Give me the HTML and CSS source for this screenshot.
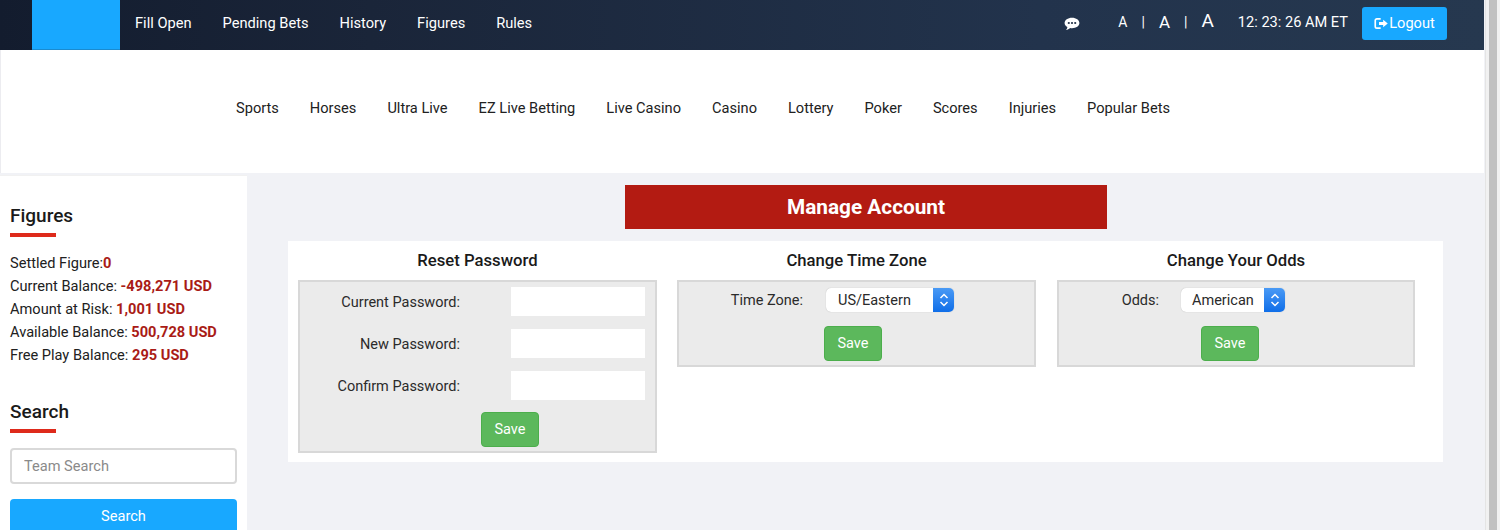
FILE: index.html
```html
<!DOCTYPE html>
<html lang="en">
<head>
<meta charset="utf-8">
<title>Manage Account</title>
<link rel="stylesheet" href="styles.css">
</head>
<body>
<div class="page">
  <header class="topbar">
    <div class="logo"></div>
    <nav class="topnav">
      <a>Fill Open</a><a>Pending Bets</a><a>History</a><a>Figures</a><a>Rules</a>
    </nav>
    <div class="tools">
      <svg class="chat" width="16" height="14" viewBox="0 0 16 14"><path fill="#fff" d="M8 .8c4.2 0 7.4 2.3 7.4 5.2S12.200 11.200 8 11.200c-.7 0-1.300-.1-1.900-.2C5 12.100 3.700 12.900 2 13c.8-.8 1.300-1.800 1.400-3C1.600 9 .6 7.600.6 6 .6 3.100 3.800.8 8 .8z"/><circle cx="4.800" cy="6" r="1.100" fill="#1f2e45"/><circle cx="8" cy="6" r="1.100" fill="#1f2e45"/><circle cx="11.200" cy="6" r="1.100" fill="#1f2e45"/></svg>
      <div class="sizes"><span class="a1">A</span><i>|</i><span class="a2">A</span><i>|</i><span class="a3">A</span></div>
      <div class="clock">12: 23: 26 AM ET</div>
      <a class="logout"><svg width="15" height="13" viewBox="0 0 18 14"><path fill="none" stroke="#fff" stroke-width="2" d="M8 1.500H3.500A2 2 0 0 0 1.500 3.500v7a2 2 0 0 0 2 2H8"/><path fill="#fff" d="M6 5.300h5V2.500L16.500 7 11 11.500V8.700H6z"/></svg>Logout</a>
    </div>
  </header>
  <nav class="mainnav">
    <a>Sports</a><a>Horses</a><a>Ultra Live</a><a>EZ Live Betting</a><a>Live Casino</a><a>Casino</a><a>Lottery</a><a>Poker</a><a>Scores</a><a>Injuries</a><a>Popular Bets</a>
  </nav>
  <div class="body-row">
    <aside class="sidebar">
      <h2 class="side-title">Figures</h2>
      <ul class="figures">
        <li>Settled Figure:<b>0</b></li>
        <li>Current Balance: <b>-498,271 USD</b></li>
        <li>Amount at Risk: <b>1,001 USD</b></li>
        <li>Available Balance: <b>500,728 USD</b></li>
        <li>Free Play Balance: <b>295 USD</b></li>
      </ul>
      <h2 class="side-title search-title">Search</h2>
      <input class="team-search" type="text" placeholder="Team Search">
      <button class="search-btn">Search</button>
    </aside>
    <main class="content">
      <h1 class="banner">Manage Account</h1>
      <section class="panel">
        <div class="col">
          <h3>Reset Password</h3>
          <div class="box">
            <div class="pw-row"><label>Current Password:</label><input type="password"></div>
            <div class="pw-row"><label>New Password:</label><input type="password"></div>
            <div class="pw-row"><label>Confirm Password:</label><input type="password"></div>
            <button class="save save-pw">Save</button>
          </div>
        </div>
        <div class="col">
          <h3>Change Time Zone</h3>
          <div class="box">
            <div class="sel-row tz"><label>Time Zone:</label>
              <div class="select"><span>US/Eastern</span><em><svg width="10" height="16" viewBox="0 0 10 16"><path fill="none" stroke="#fff" stroke-width="1.500" d="M1.500 6 5 2.500 8.500 6M1.500 10 5 13.500 8.500 10"/></svg></em></div>
            </div>
            <button class="save save-tz">Save</button>
          </div>
        </div>
        <div class="col col-odds">
          <h3>Change Your Odds</h3>
          <div class="box">
            <div class="sel-row odds"><label>Odds:</label>
              <div class="select"><span>American</span><em><svg width="10" height="16" viewBox="0 0 10 16"><path fill="none" stroke="#fff" stroke-width="1.500" d="M1.500 6 5 2.500 8.500 6M1.500 10 5 13.500 8.500 10"/></svg></em></div>
            </div>
            <button class="save save-odds">Save</button>
          </div>
        </div>
      </section>
    </main>
  </div>
  <div class="scrollbar"><div class="thumb"></div></div>
</div>
</body>
</html>
```
FILE: styles.css
```css
* { box-sizing: border-box; }
html, body { margin: 0; height: 100%; overflow: hidden; }
body { font-family: Roboto, "Liberation Sans", sans-serif; font-size: 14.500px; color: #212121; background: #f1f2f6; }
.page { position: relative; width: 1500px; height: 530px; padding-right: 16px; overflow: hidden; }

.topbar { display: flex; align-items: stretch; height: 50px; padding-left: 32px; background: linear-gradient(90deg, #131c2e 0%, #1a2539 25%, #22334c 70%, #26384f 100%); color: #fff; }
.logo { width: 88px; background: #18a8ff; border-bottom: 1px solid #1a8bd0; }
.topnav { display: flex; align-items: center; gap: 31px; padding: 0 0 4px 15px; font-size: 14.650px; }
.tools { display: flex; align-items: center; margin-left: auto; padding: 0 37px 4px 0; }
.chat { margin-right: 38px; margin-top: 1px; }
.sizes { display: flex; align-items: center; margin-right: 24px; margin-top: -2px; }
.sizes i { font-style: normal; font-size: 14px; margin: 0 14px; }
.a1 { font-size: 14px; }
.a2 { font-size: 17px; margin-top: -1px; }
.a3 { font-size: 19px; margin-top: -4px; }
.clock { font-size: 14.600px; margin-right: 14px; margin-top: -3px; }
.logout { display: flex; align-items: center; justify-content: center; width: 85px; height: 33px; background: #18a8ff; border-radius: 3px; font-size: 14.600px; }
.logout svg { flex: none; }

.mainnav { display: flex; align-items: center; gap: 31px; height: 123px; padding: 0 0 7px 235px; background: #fff; border-left: 1px solid #ececf0; font-size: 14.620px; }

.body-row { display: flex; align-items: flex-start; height: 357px; margin-top: 2px; }
.sidebar { flex: none; width: 247px; height: 355px; padding: 28px 10px 0; background: #fff; border-top: 1px solid #f1f1f1; }
.side-title { position: relative; margin: 0; font-size: 19px; font-weight: 500; line-height: 24px; color: #1a1a1a; padding-bottom: 9px; }
.side-title::after { content: ""; display: block; position: absolute; left: 0; bottom: 0; width: 46px; height: 4px; background: #de2a1b; }
.figures { list-style: none; margin: 15px 0 0; padding: 0; font-size: 14.600px; line-height: 23px; }
.figures b { color: #a91b16; font-weight: 700; }
.search-title { margin-top: 33px; }
.team-search { display: block; width: 227px; height: 36px; margin-top: 15px; padding: 0 12px; border: 2px solid #d9d9d9; border-radius: 4px; background: #fff; font: 14.600px Roboto, sans-serif; }
.team-search::placeholder { color: #8a8a8a; }
.search-btn { display: block; width: 227px; height: 34px; margin-top: 15px; border: 0; border-radius: 4px; background: #18a8ff; color: #fff; font: 14.600px Roboto, sans-serif; }

.content { flex: 1; min-width: 0; padding-top: 10px; }
.banner { width: 482px; height: 44px; margin: 0 0 12px 378px; background: #b31b12; color: #fff; font-size: 20.800px; font-weight: 700; line-height: 45px; text-align: center; }
.panel { display: flex; gap: 20px; align-items: flex-start; width: 1155px; height: 221px; margin-left: 41px; padding: 0 10px; background: #fff; }
.col { flex: 0 0 359px; }
.col-odds { flex-basis: 358px; margin-left: 1px; }
.col h3 { margin: 0; height: 39px; font-size: 16.700px; font-weight: 500; line-height: 40px; text-align: center; color: #1a1a1a; }
.box { background: #ebebeb; border: 2px solid #d8d8d8; padding-top: 5px; }

.pw-row { display: flex; align-items: center; height: 29px; margin-bottom: 13px; }
.pw-row label { width: 160px; padding-top: 1px; text-align: right; color: #2a2a2a; }
.pw-row input { width: 134px; height: 29px; margin-left: 51px; border: 0; background: #fff; }
.save { display: block; width: 58px; height: 35px; border: 1px solid #4cae4c; border-radius: 4px; background: #5cb85c; color: #fff; font: 14.500px Roboto, sans-serif; }
.save-pw { margin: -1px 0 4px 181px; }
.save-tz { margin: 14px 0 4px 145px; }
.save-odds { margin: 14px 0 4px 142px; }

.sel-row { display: flex; align-items: center; height: 24px; margin-top: 1px; color: #2a2a2a; }
.tz label { width: 124px; text-align: right; }
.tz .select { width: 128px; margin-left: 23px; }
.odds label { width: 100px; text-align: right; }
.odds .select { width: 104px; margin-left: 22px; padding-left: 11px; }
.select { display: flex; justify-content: space-between; height: 24px; background: #fff; border-radius: 5px; line-height: 25px; padding-left: 12px; box-shadow: 0 0 1px #aaa; overflow: hidden; }
.select em { display: flex; align-items: center; justify-content: center; width: 21px; background: linear-gradient(180deg, #4a9af5, #0f6ee8); }

.scrollbar { position: absolute; top: 0; right: 0; width: 15px; height: 530px; background: #f1f1f1; border-left: 1px solid #e4e4e4; }
.thumb { width: 8px; height: 530px; margin-left: 3px; background: #c1c1c1; }
```
